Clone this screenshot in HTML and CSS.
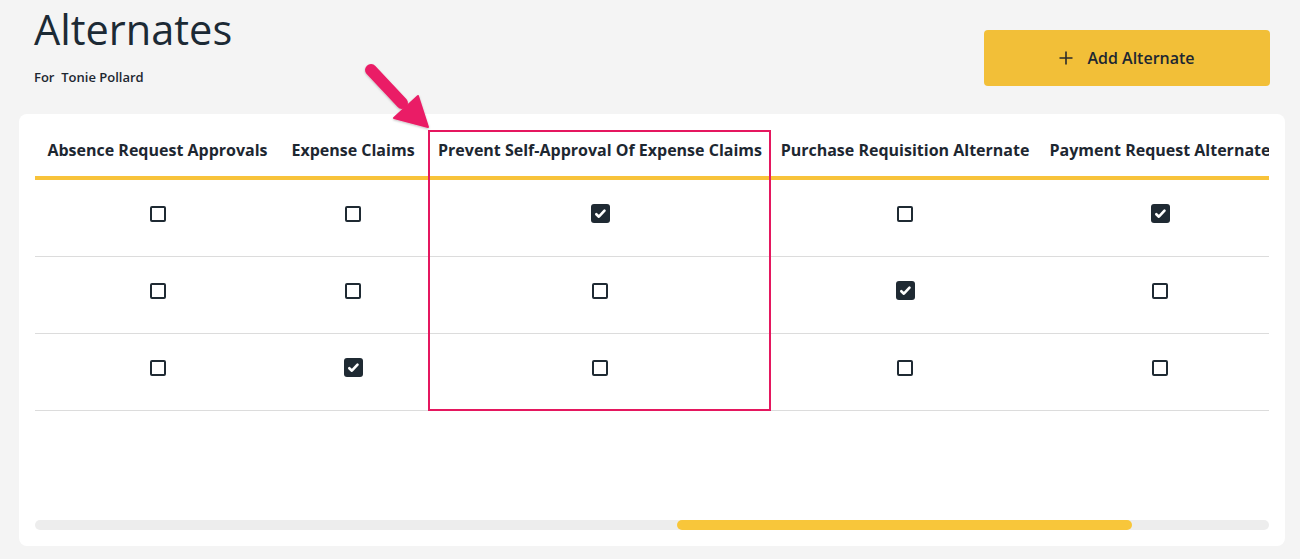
FILE: index.html
```html
<!DOCTYPE html>
<html lang="en">
<head>
    <meta charset="UTF-8">
    <meta name="viewport" content="width=device-width, initial-scale=1.0">
    <title>Alternates</title>
    <link rel="stylesheet" href="styles.css">
</head>
<body>
    <div class="page">
        <header class="page-header">
            <div class="title-block">
                <h1>Alternates</h1>
                <p class="for-user">For&nbsp; Tonie Pollard</p>
            </div>
            <button class="add-btn">
                <svg class="plus" viewBox="0 0 14 14" width="14" height="14"><path d="M7 0.5V13.5M0.5 7H13.5" stroke="#2a2a2a" stroke-width="1.6" fill="none"/></svg>
                <span>Add Alternate</span>
            </button>
        </header>

        <section class="card">
            <div class="table-wrap">
                <table class="alt-table">
                    <colgroup>
                        <col class="c1"><col class="c2"><col class="c3"><col class="c4"><col class="c5">
                    </colgroup>
                    <thead>
                        <tr>
                            <th>Absence Request Approvals</th>
                            <th>Expense Claims</th>
                            <th>Prevent Self-Approval Of Expense Claims</th>
                            <th>Purchase Requisition Alternate</th>
                            <th>Payment Request Alternate</th>
                        </tr>
                    </thead>
                    <tbody>
                        <tr>
                            <td><span class="cb"></span></td>
                            <td><span class="cb"></span></td>
                            <td><span class="cb checked"></span></td>
                            <td><span class="cb"></span></td>
                            <td><span class="cb checked"></span></td>
                        </tr>
                        <tr>
                            <td><span class="cb"></span></td>
                            <td><span class="cb"></span></td>
                            <td><span class="cb"></span></td>
                            <td><span class="cb checked"></span></td>
                            <td><span class="cb"></span></td>
                        </tr>
                        <tr>
                            <td><span class="cb"></span></td>
                            <td><span class="cb checked"></span></td>
                            <td><span class="cb"></span></td>
                            <td><span class="cb"></span></td>
                            <td><span class="cb"></span></td>
                        </tr>
                    </tbody>
                </table>
            </div>
            <div class="scrollbar"><div class="thumb" style="margin-left: 642px; width: 455px;"></div></div>
            <div class="highlight"></div>
        </section>

        <!-- annotation arrow -->
        <svg class="arrow" viewBox="355 55 85 85" width="85" height="85">
            <defs>
                <filter id="sh" x="-20%" y="-20%" width="140%" height="140%">
                    <feDropShadow dx="0" dy="1" stdDeviation="1.2" flood-color="#000" flood-opacity="0.25"/>
                </filter>
            </defs>
            <g filter="url(#sh)" fill="#ea1e66" stroke="#ea1e66">
                <line x1="371" y1="70" x2="402" y2="103" stroke-width="12" stroke-linecap="round"/>
                <polygon points="394,118 418,96 428,127" stroke-width="2" stroke-linejoin="round"/>
            </g>
        </svg>
    </div>
</body>
</html>
```

FILE: styles.css
```css
body {
    margin: 0;
    background-color: #f4f4f4;
    font-family: "Open Sans", "Noto Sans", sans-serif;
    color: #1d2731;
}
.page {
    position: relative;
    padding: 0 15px 13px 19px;
}
.page-header {
    display: flex;
    justify-content: space-between;
    align-items: flex-start;
    height: 110px;
    padding: 4px 15px 0 15px;
}
h1 {
    margin: 0;
    font-size: 41.5px;
    font-weight: 400;
    line-height: 50px;
    color: #1c2a35;
}
.for-user {
    margin: 14px 0 0;
    font-size: 13px;
    font-weight: 600;
    line-height: 18px;
}
.add-btn {
    margin-top: 26px;
    width: 286px;
    height: 56px;
    display: flex;
    align-items: center;
    justify-content: center;
    gap: 14px;
    background: #f2bf38;
    border: none;
    border-radius: 4px;
    font-family: inherit;
    font-size: 16px;
    font-weight: 600;
    color: #1d2731;
    cursor: pointer;
}
.plus {
    display: block;
}
.card {
    position: relative;
    background: #fff;
    border-radius: 8px;
    padding: 16px 16px 16px;
}
.table-wrap {
    height: 390px;
    overflow: hidden;
}
.alt-table {
    border-collapse: collapse;
    table-layout: fixed;
    width: 1249px;
    white-space: nowrap;
}
.c1 { width: 245px; }
.c2 { width: 146px; }
.c3 { width: 348px; }
.c4 { width: 262px; }
.c5 { width: 248px; }
.alt-table th {
    padding: 10px 0 16px;
    font-size: 16px;
    font-weight: 700;
    line-height: 20px;
    text-align: center;
    border-bottom: 4px solid #f8c33a;
}
.alt-table td {
    height: 64px;
    padding: 0 0 12px;
    text-align: center;
    vertical-align: middle;
    border-bottom: 1px solid #dcdcdc;
}
.cb {
    display: inline-block;
    vertical-align: middle;
    box-sizing: border-box;
    width: 16px;
    height: 16px;
    border: 2px solid #1f2a33;
    border-radius: 2px;
}
.cb.checked {
    width: 19px;
    height: 19px;
    border: none;
    border-radius: 3px;
    background: #1f2a33 url("data:image/svg+xml;utf8,<svg xmlns='http://www.w3.org/2000/svg' viewBox='0 0 19 19'><path d='M5.3 10.2l2.6 2.5 5.6-6' stroke='white' stroke-width='2.6' fill='none' stroke-linecap='round' stroke-linejoin='round'/></svg>") center / 19px 19px no-repeat;
}
.scrollbar {
    height: 10px;
    border-radius: 5px;
    background: #ededed;
}
.thumb {
    height: 10px;
    border-radius: 5px;
    background: #f8c63a;
}
.highlight {
    position: absolute;
    left: 409px;
    top: 16px;
    width: 339px;
    height: 277px;
    border: 2px solid #e5175f;
}
.arrow {
    position: absolute;
    left: 355px;
    top: 55px;
    overflow: visible;
}
```
